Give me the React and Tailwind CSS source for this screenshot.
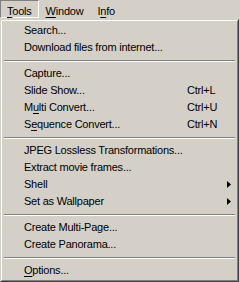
const items = [
  [{ label: "Search..." }, { label: "Download files from internet..." }],
  [
    { label: "Capture..." },
    { label: "Slide Show...", shortcut: "Ctrl+L" },
    { label: "Multi Convert...", key: 1, shortcut: "Ctrl+U" },
    { label: "Sequence Convert...", key: 1, shortcut: "Ctrl+N" },
  ],
  [
    { label: "JPEG Lossless Transformations..." },
    { label: "Extract movie frames..." },
    { label: "Shell", sub: true },
    { label: "Set as Wallpaper", sub: true },
  ],
  [{ label: "Create Multi-Page..." }, { label: "Create Panorama..." }],
  [{ label: "Options...", key: 0 }],
];

function Mnemonic({ text, at }) {
  if (at === undefined) return text;
  return (
    <>
      {text.slice(0, at)}
      <span className="underline underline-offset-[2px]">{text[at]}</span>
      {text.slice(at + 1)}
    </>
  );
}

function Arrow() {
  return (
    <svg width="4" height="7" viewBox="0 0 4 7" className="block">
      <path d="M0 0 L4 3.5 L0 7 Z" fill="#000" />
    </svg>
  );
}

function Item({ item }) {
  return (
    <div className="flex h-[17px] items-center leading-[17px] pl-[21px]">
      <span className="flex-1 whitespace-nowrap">
        <Mnemonic text={item.label} at={item.key} />
      </span>
      {item.shortcut && <span className="w-[49px]">{item.shortcut}</span>}
      {item.sub && (
        <span className="mr-[5px]">
          <Arrow />
        </span>
      )}
    </div>
  );
}

function Separator() {
  return (
    <div className="h-[9px] flex flex-col justify-center px-[1px]">
      <div className="h-px bg-[#808080]" />
      <div className="h-px bg-white" />
    </div>
  );
}

export default function App() {
  return (
    <div
      className="w-[240px] h-[282px] bg-[#d4d0c8] text-black text-[11px] tracking-[-0.22px] overflow-hidden"
      style={{ fontFamily: '"Liberation Sans", Arial, sans-serif' }}
    >
      {/* menu bar */}
      <div className="flex h-[19px]">
        <div className="h-[18px] border border-t-[#808080] border-l-[#808080] border-r-white border-b-white pl-[6px] pr-[6px] pt-[3px] leading-[14px]">
          <Mnemonic text="Tools" at={0} />
        </div>
        <div className="h-[18px] px-[7px] pt-[4px] leading-[14px]">
          <Mnemonic text="Window" at={0} />
        </div>
        <div className="h-[18px] px-[7px] pt-[4px] leading-[14px]">
          <Mnemonic text="Info" at={1} />
        </div>
      </div>

      {/* dropdown */}
      <div className="w-[239px] h-[263px] border border-t-[#d4d0c8] border-l-[#d4d0c8] border-r-[#404040] border-b-[#404040]">
        <div className="h-full border border-t-white border-l-white border-r-[#808080] border-b-[#808080] p-px">
          {items.map((group, gi) => (
            <div key={gi}>
              {gi > 0 && <Separator />}
              {group.map((item) => (
                <Item key={item.label} item={item} />
              ))}
            </div>
          ))}
        </div>
      </div>
    </div>
  );
}
